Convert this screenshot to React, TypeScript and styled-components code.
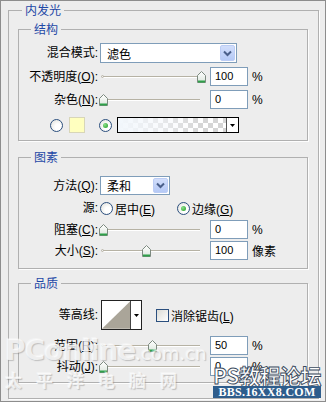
import React from "react";
import styled, { createGlobalStyle } from "styled-components";

const Global = createGlobalStyle`
  html, body { margin: 0; padding: 0; background: #ededed; }
  body { font-family: "Liberation Sans", "Noto Sans CJK SC", sans-serif; }
`;

const Frame = styled.div`
  position: relative;
  box-sizing: border-box;
  width: 326px;
  height: 402px;
  border: 1px solid #8d8d8d;
  background: #ededed;
  overflow: hidden;
  padding: 1px 6px 0 7px;
  font-size: 12px;
  color: #000;
`;

const Group = styled.fieldset<{ $pad: string; $mt?: number; $h: number }>`
  margin: ${(p) => p.$mt ?? 0}px 0 0 0;
  padding: ${(p) => p.$pad};
  border: 1px solid #b0b0b0;
  box-shadow: 1px 1px 0 #fdfdfd;
  min-width: 0;
  box-sizing: border-box;
  height: ${(p) => p.$h}px;
  display: flex;
  flex-direction: column;
`;

const Legend = styled.legend<{ $ml: number }>`
  margin-left: ${(p) => p.$ml}px;
  padding: 0 3px;
  color: #1e48a6;
  font-size: 12px;
  line-height: 16px;
  font-family: "Noto Sans CJK SC", sans-serif;
`;

const Row = styled.div<{ $mt: number; $h: number }>`
  display: flex;
  align-items: center;
  margin-top: ${(p) => p.$mt}px;
  height: ${(p) => p.$h}px;
  flex: none;
`;

const Label = styled.span`
  width: 79px;
  flex: none;
  text-align: right;
  white-space: nowrap;
  line-height: 16px;
  u {
    text-decoration: underline;
    text-underline-offset: 1px;
  }
`;

const Select = styled.div<{ $w: number }>`
  box-sizing: border-box;
  margin-left: 2px;
  width: ${(p) => p.$w}px;
  height: 100%;
  border: 1px solid #7f9db9;
  background: #fff;
  display: flex;
  align-items: center;
  padding: 0 1px 0 6px;
  justify-content: space-between;
`;

const DropBtn = styled.span`
  box-sizing: border-box;
  width: 15px;
  height: calc(100% - 2px);
  border: 1px solid #bccdf5;
  border-radius: 2px;
  background: linear-gradient(#d2defb, #b5c9f6);
  display: flex;
  align-items: center;
  justify-content: center;
`;

const SliderBox = styled.div`
  position: relative;
  width: 108px;
  height: 14px;
  flex: none;
  display: flex;
  align-items: center;
  &::before {
    content: "";
    position: absolute;
    left: 3px;
    top: 5px;
    width: 3px;
    height: 3px;
    border-radius: 50%;
    border: 1px solid #b8b4a6;
    box-sizing: border-box;
  }
`;

const Track = styled.div`
  margin: 0 6px 0 5px;
  flex: 1;
  height: 1px;
  background: #b6b2a4;
  box-shadow: 0 1px 0 #fff;
`;

const ThumbWrap = styled.span`
  position: absolute;
  top: 1px;
  width: 9px;
  height: 12px;
  display: block;
`;

const NumBox = styled.div`
  box-sizing: border-box;
  margin-left: 4px;
  width: 38px;
  height: 19px;
  border: 1px solid #7f9db9;
  background: #fff;
  padding-left: 4px;
  font-size: 11px;
  line-height: 17px;
`;

const Unit = styled.span`
  margin-left: 4px;
  font-size: 12px;
`;

const Radio = styled.span<{ $ml: number; $on?: boolean }>`
  box-sizing: border-box;
  margin-left: ${(p) => p.$ml}px;
  width: 13px;
  height: 13px;
  flex: none;
  border-radius: 50%;
  border: 1px solid #2b4f7e;
  background: radial-gradient(circle at 65% 65%, #fff 30%, #dcdcd6 100%);
  display: flex;
  align-items: center;
  justify-content: center;
  &::after {
    content: "";
    display: ${(p) => (p.$on ? "block" : "none")};
    width: 5px;
    height: 5px;
    border-radius: 50%;
    background: radial-gradient(circle at 35% 35%, #8de08d, #1d9b1d);
  }
`;

const Swatch = styled.span`
  box-sizing: border-box;
  margin-left: 6px;
  width: 16px;
  height: 16px;
  border: 1px solid #d8d6b8;
  background: #ffffbf;
`;

const GradBox = styled.div`
  box-sizing: border-box;
  margin-left: 5px;
  width: 122px;
  height: 16px;
  border: 1px solid #000;
  display: flex;
  background: linear-gradient(to right, #f2f7fc 0%, rgba(245, 248, 252, 0.6) 35%, rgba(255, 255, 255, 0) 70%),
    repeating-conic-gradient(#d5d5d5 0 25%, #ffffff 0 50%) 0 0 / 10px 10px;
`;

const GradArrow = styled.span`
  margin-left: auto;
  width: 11px;
  height: 100%;
  background: #fff;
  border-left: 1px solid #555;
  display: flex;
  align-items: center;
  justify-content: center;
`;

const OptLabel = styled.span<{ $w?: number }>`
  margin-left: 2px;
  ${(p) => (p.$w ? `width: ${p.$w}px;` : "")}
  white-space: nowrap;
  u {
    text-decoration: underline;
    text-underline-offset: 1px;
  }
`;

const Contour = styled.div`
  box-sizing: border-box;
  margin-left: 3px;
  width: 41px;
  height: 30px;
  border: 1px solid #222;
  display: flex;
  background: #fff;
`;

const ContourArrow = styled.span`
  width: 10px;
  border-left: 1px solid #444;
  display: flex;
  align-items: center;
  justify-content: center;
`;

const Check = styled.span`
  box-sizing: border-box;
  margin-left: 14px;
  width: 13px;
  height: 13px;
  border: 1px solid #2b4f7e;
  background: linear-gradient(135deg, #dcdcd6, #fff);
`;

const Watermark = styled.div`
  position: absolute;
  left: 4px;
  top: 336px;
  pointer-events: none;
  color: rgba(255, 255, 255, 0.72);
  text-shadow: 1px 1px 1px rgba(110, 110, 110, 0.35), -1px -1px 0 rgba(255, 255, 255, 0.35);
  font-family: "DejaVu Sans", "Liberation Sans", sans-serif;
  line-height: 1;
`;

const WmBig = styled.div`
  font-size: 28px;
  font-weight: bold;
  letter-spacing: -1px;
  span {
    font-size: 18px;
    font-weight: normal;
    letter-spacing: 0;
  }
`;

const WmCn = styled.div`
  margin-top: 6px;
  font-family: "Noto Sans CJK SC", sans-serif;
  font-size: 17px;
  letter-spacing: 14px;
  font-weight: bold;
`;

const Badge = styled.div`
  position: absolute;
  left: 212px;
  top: 363px;
  width: 108px;
  pointer-events: none;
  display: flex;
  flex-direction: column;
  align-items: stretch;
`;

const BadgeTitle = styled.div`
  font-family: "Noto Sans CJK SC", sans-serif;
  font-size: 21px;
  line-height: 22px;
  font-weight: bold;
  color: #fff;
  letter-spacing: -0.5px;
  -webkit-text-stroke: 0.9px #3a4a5e;
  text-align: center;
  white-space: nowrap;
`;

const BadgeBar = styled.div`
  background: #2e5d8c;
  color: #fff;
  font-family: "Liberation Serif", serif;
  font-weight: bold;
  font-size: 12px;
  line-height: 12px;
  height: 12px;
  text-align: center;
  letter-spacing: 0.3px;
`;

const Thumb = ({ pct }: { pct: number }) => (
  <ThumbWrap style={{ left: 0.5 + pct * 98 }}>
    <svg width="9" height="12" viewBox="0 0 9 12">
      <defs>
        <linearGradient id="tg" x1="0" y1="0" x2="0" y2="1">
          <stop offset="0" stopColor="#ffffff" />
          <stop offset="1" stopColor="#dde6dd" />
        </linearGradient>
      </defs>
      <path d="M4.5 0.5 L8.5 4.5 L8.5 11.5 L0.5 11.5 L0.5 4.5 Z" fill="url(#tg)" stroke="#7d8a80" />
      <rect x="1" y="9.5" width="7" height="2" fill="#2fa04a" />
    </svg>
  </ThumbWrap>
);

const Slider = ({ pct }: { pct: number }) => (
  <SliderBox>
    <Track />
    <Thumb pct={pct} />
  </SliderBox>
);

const Chevron = () => (
  <svg width="9" height="7" viewBox="0 0 9 7">
    <path d="M1 1.5 L4.5 5 L8 1.5" fill="none" stroke="#4a5f8a" strokeWidth="2" />
  </svg>
);

const DownTri = () => (
  <svg width="5" height="3" viewBox="0 0 5 3">
    <path d="M0 0 H5 L2.5 3 Z" fill="#000" />
  </svg>
);

export default function App() {
  return (
    <>
      <Global />
      <Frame>
        <Group $pad="3px 10px 0 9px" $h={397}>
          <Legend $ml={4}>内发光</Legend>
          <Group $pad="6px 0 0 0" $h={120}>
            <Legend $ml={12}>结构</Legend>
            <Row $mt={0} $h={20}>
              <Label>混合模式:</Label>
              <Select $w={137}>
                <span>滤色</span>
                <DropBtn>
                  <Chevron />
                </DropBtn>
              </Select>
            </Row>
            <Row $mt={4} $h={19}>
              <Label>
                不透明度(<u>O</u>):
              </Label>
              <Slider pct={1} />
              <NumBox>100</NumBox>
              <Unit>%</Unit>
            </Row>
            <Row $mt={4} $h={19}>
              <Label>
                杂色(<u>N</u>):
              </Label>
              <Slider pct={0} />
              <NumBox>0</NumBox>
              <Unit>%</Unit>
            </Row>
            <Row $mt={8} $h={16}>
              <Radio $ml={31} />
              <Swatch />
              <Radio $ml={14} $on />
              <GradBox>
                <GradArrow>
                  <DownTri />
                </GradArrow>
              </GradBox>
            </Row>
          </Group>

          <Group $pad="11px 0 0 0" $h={120} $mt={8}>
            <Legend $ml={12}>图素</Legend>
            <Row $mt={0} $h={19}>
              <Label>
                方法(<u>Q</u>):
              </Label>
              <Select $w={70}>
                <span>柔和</span>
                <DropBtn>
                  <Chevron />
                </DropBtn>
              </Select>
            </Row>
            <Row $mt={5} $h={16}>
              <Label>源:</Label>
              <Radio $ml={2} />
              <OptLabel $w={62}>
                居中(<u>E</u>)
              </OptLabel>
              <Radio $ml={0} $on />
              <OptLabel>
                边缘(<u>G</u>)
              </OptLabel>
            </Row>
            <Row $mt={4} $h={19}>
              <Label>
                阻塞(<u>C</u>):
              </Label>
              <Slider pct={0} />
              <NumBox>0</NumBox>
              <Unit>%</Unit>
            </Row>
            <Row $mt={2} $h={19}>
              <Label>
                大小(<u>S</u>):
              </Label>
              <Slider pct={0.44} />
              <NumBox>100</NumBox>
              <Unit>像素</Unit>
            </Row>
          </Group>

          <Group $pad="9px 0 0 0" $h={108} $mt={6}>
            <Legend $ml={12}>品质</Legend>
            <Row $mt={0} $h={30}>
              <Label>等高线:</Label>
              <Contour>
                <svg width="29" height="28" viewBox="0 0 29 28">
                  <path d="M0 28 L29 0 L29 28 Z" fill="#aaa599" />
                </svg>
                <ContourArrow>
                  <DownTri />
                </ContourArrow>
              </Contour>
              <Check />
              <OptLabel>
                消除锯齿(<u>L</u>)
              </OptLabel>
            </Row>
            <Row $mt={6} $h={19}>
              <Label>
                范围(<u>R</u>):
              </Label>
              <Slider pct={0.5} />
              <NumBox>50</NumBox>
              <Unit>%</Unit>
            </Row>
            <Row $mt={2} $h={19}>
              <Label>
                抖动(<u>J</u>):
              </Label>
              <Slider pct={0} />
              <NumBox>0</NumBox>
              <Unit>%</Unit>
            </Row>
          </Group>
        </Group>

        <Watermark>
          <WmBig>
            PConline<span>.com.cn</span>
          </WmBig>
          <WmCn>太平洋电脑网</WmCn>
        </Watermark>
        <Badge>
          <BadgeTitle>PS教程论坛</BadgeTitle>
          <BadgeBar>BBS.16XX8.COM</BadgeBar>
        </Badge>
      </Frame>
    </>
  );
}
